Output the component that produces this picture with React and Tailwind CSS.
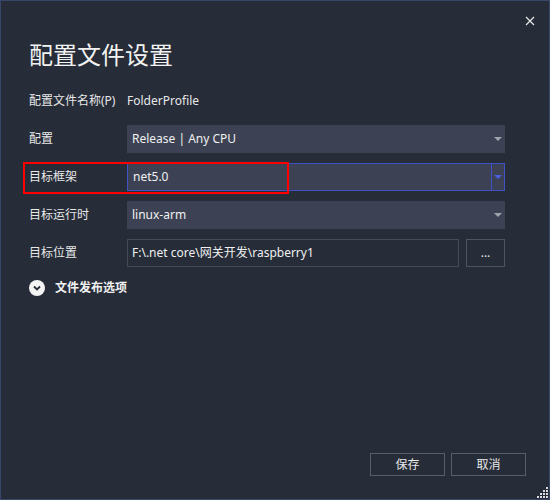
import React from "react";

const font = { fontFamily: '"Segoe UI", "Noto Sans", "Noto Sans CJK SC", sans-serif' };

const Arrow = ({ color }) => (
  <svg width="8" height="4" viewBox="0 0 8 4">
    <path d="M0 0 H8 L4 4 Z" fill={color} />
  </svg>
);

const Select = ({ value, active }) => (
  <div
    className={
      "flex h-[28px] items-stretch bg-[#3c4254] " +
      (active ? "border border-[#3f51c6]" : "")
    }
  >
    <div className="flex flex-1 items-center pl-[5px] text-[12px] text-[#f0f0f0]">{value}</div>
    <div
      className={
        "flex w-[13px] items-center justify-center " +
        (active ? "border-l border-[#3f51c6]" : "mr-[1px]")
      }
    >
      <Arrow color={active ? "#4a5fe0" : "#9ea3ad"} />
    </div>
  </div>
);

const Label = ({ children }) => (
  <div className="flex h-[28px] items-center text-[12px] text-[#e8e8e8]">{children}</div>
);

export default function App() {
  return (
    <div
      className="relative flex h-[500px] w-[550px] flex-col border border-[#38466a] bg-[#262c38]"
      style={font}
    >
      <div className="flex h-[38px] justify-end pr-[14px] pt-[15px]">
        <svg width="10" height="10" viewBox="0 0 10 10">
          <path d="M1 1 L9 9 M9 1 L1 9" stroke="#e8e8e8" strokeWidth="1.2" />
        </svg>
      </div>
      <div className="pl-[28px] text-[24px] leading-[32px] text-[#f2f2f2]">配置文件设置</div>

      <div className="mt-[16px] grid grid-cols-[98px_1fr] gap-y-[10px] pl-[28px] pr-[44px]">
        <Label>配置文件名称(P)</Label>
        <div className="flex h-[28px] items-center text-[12px] text-[#e8e8e8]">FolderProfile</div>

        <Label>配置</Label>
        <Select value="Release | Any CPU" />

        <Label>目标框架</Label>
        <Select value="net5.0" active />

        <Label>目标运行时</Label>
        <Select value="linux-arm" />

        <Label>目标位置</Label>
        <div className="flex gap-[7px]">
          <div className="flex h-[28px] flex-1 items-center border border-[#454b56] pl-[4px] text-[12px] text-[#f0f0f0]">
            F:\.net core\网关开发\raspberry1
          </div>
          <div className="flex h-[28px] w-[39px] items-center justify-center border border-[#4f555f] text-[12px] text-[#e8e8e8]">
            ...
          </div>
        </div>
      </div>

      <div className="mt-[7px] flex h-[28px] items-center gap-[10px] pl-[28px]">
        <div className="flex h-[16px] w-[16px] items-center justify-center rounded-full bg-[#f4f4f4]">
          <svg width="8" height="6" viewBox="0 0 8 6">
            <path d="M1 1.5 L4 4.5 L7 1.5" stroke="#262c38" strokeWidth="1.8" fill="none" />
          </svg>
        </div>
        <span className="text-[12px] font-bold text-[#f0f0f0]">文件发布选项</span>
      </div>

      <div className="flex-1" />

      <div className="flex justify-end gap-[6px] pb-[23px] pr-[23px]">
        <button className="flex h-[23px] w-[75px] items-center justify-center border border-[#585d66] text-[12px] text-[#e8e8e8]">
          保存
        </button>
        <button className="flex h-[23px] w-[75px] items-center justify-center border border-[#585d66] text-[12px] text-[#e8e8e8]">
          取消
        </button>
      </div>

      {/* red highlight annotation */}
      <div className="absolute left-[22px] top-[161px] h-[32px] w-[266px] border-2 border-[#ff0000]" />

      {/* resize grip */}
      <svg className="absolute bottom-0 right-0" width="14" height="14" viewBox="0 0 14 14">
        <g fill="#d8dbe0">
          <rect x="11" y="2" width="2" height="2" />
          <rect x="8" y="5" width="2" height="2" />
          <rect x="11" y="5" width="2" height="2" />
          <rect x="5" y="8" width="2" height="2" />
          <rect x="8" y="8" width="2" height="2" />
          <rect x="11" y="8" width="2" height="2" />
          <rect x="2" y="11" width="2" height="2" />
          <rect x="5" y="11" width="2" height="2" />
          <rect x="8" y="11" width="2" height="2" />
          <rect x="11" y="11" width="2" height="2" />
        </g>
      </svg>
    </div>
  );
}
